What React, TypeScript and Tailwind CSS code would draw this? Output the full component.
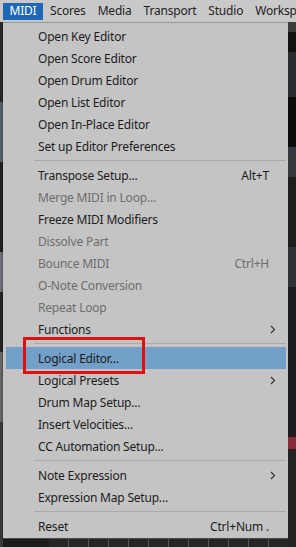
import React from 'react';

type Item =
  | { kind: 'sep' }
  | { kind: 'item'; label: string; shortcut?: string; disabled?: boolean; submenu?: boolean; active?: boolean };

const items: Item[] = [
  { kind: 'item', label: 'Open Key Editor' },
  { kind: 'item', label: 'Open Score Editor' },
  { kind: 'item', label: 'Open Drum Editor' },
  { kind: 'item', label: 'Open List Editor' },
  { kind: 'item', label: 'Open In-Place Editor' },
  { kind: 'item', label: 'Set up Editor Preferences' },
  { kind: 'sep' },
  { kind: 'item', label: 'Transpose Setup...', shortcut: 'Alt+T' },
  { kind: 'item', label: 'Merge MIDI in Loop...', disabled: true },
  { kind: 'item', label: 'Freeze MIDI Modifiers' },
  { kind: 'item', label: 'Dissolve Part', disabled: true },
  { kind: 'item', label: 'Bounce MIDI', shortcut: 'Ctrl+H', disabled: true },
  { kind: 'item', label: 'O-Note Conversion', disabled: true },
  { kind: 'item', label: 'Repeat Loop', disabled: true },
  { kind: 'item', label: 'Functions', submenu: true },
  { kind: 'sep' },
  { kind: 'item', label: 'Logical Editor...', active: true },
  { kind: 'item', label: 'Logical Presets', submenu: true },
  { kind: 'item', label: 'Drum Map Setup...' },
  { kind: 'item', label: 'Insert Velocities...' },
  { kind: 'item', label: 'CC Automation Setup...' },
  { kind: 'sep' },
  { kind: 'item', label: 'Note Expression', submenu: true },
  { kind: 'item', label: 'Expression Map Setup...' },
  { kind: 'sep' },
  { kind: 'item', label: 'Reset', shortcut: 'Ctrl+Num .' },
];

const menuBar = ['Scores', 'Media', 'Transport', 'Studio', 'Workspaces'];

const Chevron = () => (
  <svg width="6" height="9" viewBox="0 0 6 9" className="text-[#333]">
    <path d="M1 1 L4.5 4.5 L1 8" fill="none" stroke="currentColor" strokeWidth="1.2" />
  </svg>
);

const App: React.FC = () => {
  return (
    <div
      className="relative w-[296px] h-[547px] overflow-hidden bg-[#1b1b1b] flex flex-col tracking-[-0.2px]"
      style={{ fontFamily: '"Noto Sans", "Open Sans", sans-serif' }}
    >
      {/* Menu bar */}
      <div className="h-[22px] bg-[#c9c9c9] flex items-center pl-[3px] text-[12px] text-[#222] whitespace-nowrap overflow-hidden">
        <div className="shrink-0 h-[17px] w-[40px] mr-[1px] bg-[#1f68b8] text-white flex items-center justify-center">MIDI</div>
        {menuBar.map((m) => (
          <div key={m} className="shrink-0 px-[6px]">
            {m}
          </div>
        ))}
      </div>

      <div className="flex flex-1">
        {/* left strip */}
        <div className="w-[3px] flex flex-col">
          <div className="h-[80px] bg-[#2a2a2a]" />
          <div className="h-[60px] bg-[#5b6168]" />
          <div className="h-[90px] bg-[#222]" />
          <div className="h-[40px] bg-[#70757a]" />
          <div className="h-[60px] bg-[#262626]" />
          <div className="h-[70px] bg-[#6a6a6a]" />
          <div className="flex-1 bg-[#3a3a3a]" />
        </div>

        <div className="flex flex-col">
          {/* Menu */}
          <div className="w-[285px] h-[516px] bg-[#c4c4c4] border-t border-[#9a9a9a] pt-[2px] flex flex-col text-[12px] shadow-[0_2px_3px_rgba(0,0,0,0.5)]">
            {items.map((it, i) =>
              it.kind === 'sep' ? (
                <div key={i} className="h-[7px] flex items-center pl-[31px] pr-[2px]">
                  <div className="h-px w-full bg-[#a9a9a9]" />
                </div>
              ) : (
                <div key={i} className="h-[22px] flex pl-[3px] pr-[2px]">
                  <div
                    className={`flex-1 flex items-center pt-[1px] pl-[32px] pr-[10px] ${
                      it.active ? 'bg-[#73a0c8]' : ''
                    } ${it.disabled ? 'text-[#6d6d6d]' : 'text-[#1c1c1c]'}`}
                  >
                    <span className="flex-1 whitespace-nowrap">{it.label}</span>
                    {it.shortcut && <span className="whitespace-nowrap mr-[7px]">{it.shortcut}</span>}
                    {it.submenu && <Chevron />}
                  </div>
                </div>
              )
            )}
          </div>
          {/* bottom strip */}
          <div className="flex-1 bg-[#2b2b2b] border-t border-[#4a4a4a] flex">
            <div className="w-[46px] bg-[#1c1c1c]" />
            <div className="flex-1 grid grid-cols-[repeat(12,1fr)] gap-px bg-[#555]">
              {Array.from({ length: 12 }).map((_, i) => (
                <div key={i} className="bg-[#262626]" />
              ))}
            </div>
          </div>
        </div>

        {/* right strip */}
        <div className="flex-1 flex flex-col">
          <div className="h-[10px] bg-[#3b3b3b]" />
          <div className="h-[20px] bg-[#111]" />
          <div className="h-[45px] bg-[#2a2d30]" />
          <div className="h-[50px] bg-[#0c0c0c]" />
          <div className="h-[30px] bg-[#35383c]" />
          <div className="h-[70px] bg-[#1e1e1e]" />
          <div className="h-[40px] bg-[#2f3236]" />
          <div className="h-[150px] bg-[#1b1d20]" />
          <div className="h-[12px] bg-[#8a2a3a]" />
          <div className="flex-1 bg-[#222]" />
        </div>
      </div>

      {/* red annotation box */}
      <div className="absolute left-[23px] top-[337px] w-[122px] h-[37px] border-[3px] border-[#e01010]" />
    </div>
  );
};

export default App;
